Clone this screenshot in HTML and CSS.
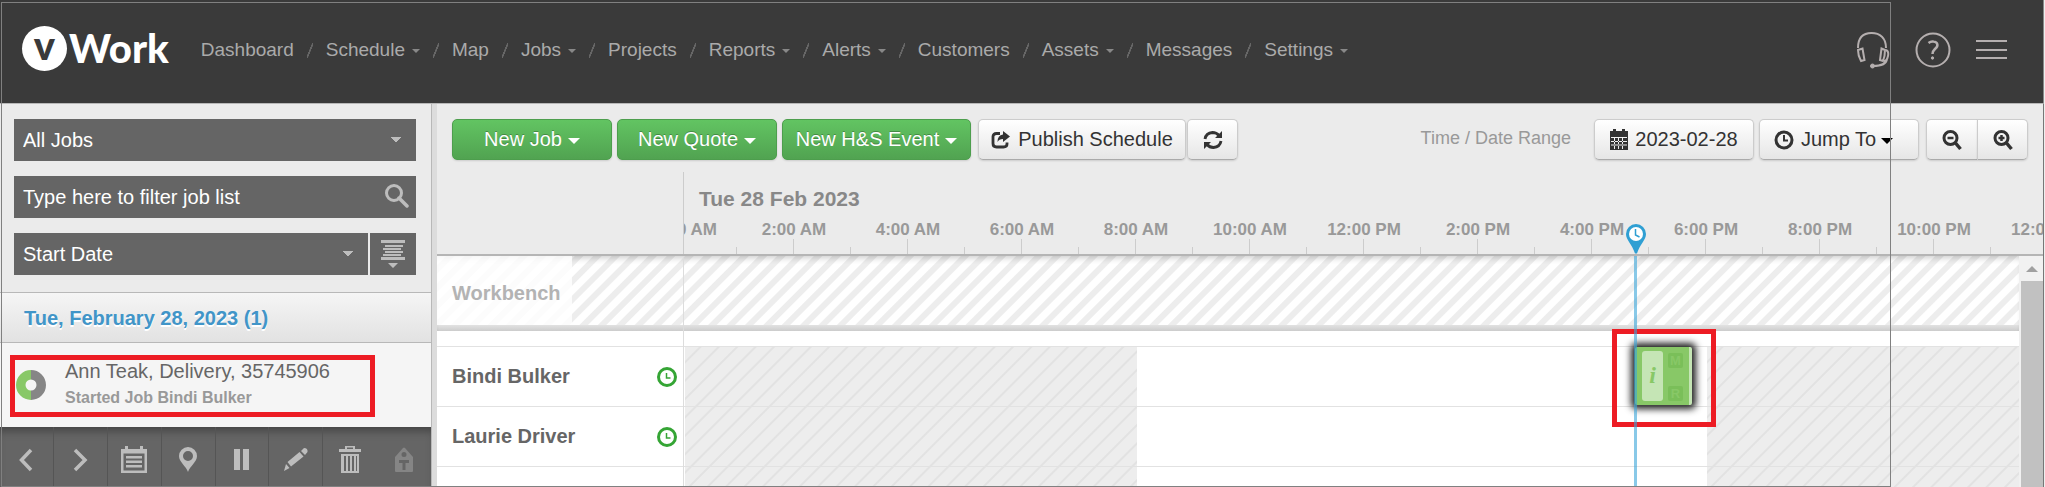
FILE: index.html
```html
<!DOCTYPE html>
<html lang="en">
<head>
<meta charset="utf-8">
<title>vWork Schedule</title>
<link rel="stylesheet" href="styles.css">
</head>
<body>
<div class="app">
  <header class="topbar">
    <a class="logo" href="#" aria-label="vWork"><span class="logo-mark">v</span><span class="logo-word">Work</span></a>
    <nav class="nav">
      <a href="#">Dashboard</a><i class="sep"></i>
      <a href="#" class="drop">Schedule</a><i class="sep"></i>
      <a href="#">Map</a><i class="sep"></i>
      <a href="#" class="drop">Jobs</a><i class="sep"></i>
      <a href="#">Projects</a><i class="sep"></i>
      <a href="#" class="drop">Reports</a><i class="sep"></i>
      <a href="#" class="drop">Alerts</a><i class="sep"></i>
      <a href="#">Customers</a><i class="sep"></i>
      <a href="#" class="drop">Assets</a><i class="sep"></i>
      <a href="#">Messages</a><i class="sep"></i>
      <a href="#" class="drop">Settings</a>
    </nav>
    <div class="tools">
      <button aria-label="Support"><svg width="34" height="38" viewBox="0 0 34 38" fill="none" stroke="#b5afaf" stroke-width="2"><path d="M2 17C2 7 7 2 15.500 2S30 7 30 17"/><path d="M2 19l4.500-1.500L8.500 29 5 30Q2 25 2 19zM29 19l-3.500-1.500L24 29l3 1Q29 25 29 19z"/><path d="M30 19q3 1 2 6t-4 5M31 28q-1 7-14 7"/><circle cx="16.500" cy="35" r="2" fill="#b5afaf" stroke-width="1"/></svg></button>
      <button aria-label="Help"><svg width="36" height="36" viewBox="0 0 36 36" fill="none" stroke="#b5afaf" stroke-width="2"><circle cx="18" cy="18" r="16.500"/><path d="M13.500 11Q16 9 18.500 9.500C23 10 23.500 14 20.500 16.500 18.500 18.500 17.500 19 17.500 22" stroke-width="2.500"/><circle cx="17.500" cy="26" r="1.200" fill="#b5afaf" stroke-width="1"/></svg></button>
      <button aria-label="Menu"><svg width="31" height="20" viewBox="0 0 31 20" fill="#b5afaf"><path d="M0 0h31v2H0zM0 9h31v2H0zM0 17h31v2H0z"/></svg></button>
    </div>
  </header>

  <div class="workspace">
    <aside class="sidebar">
      <div class="filters">
        <select class="field" aria-label="Job filter"><option>All Jobs</option></select>
        <div class="search">
          <input class="field" type="text" aria-label="Filter job list" placeholder="Type here to filter job list">
          <svg width="24" height="24" viewBox="0 0 24 24" fill="none" stroke="#bdbdbd"><circle cx="9" cy="9" r="7.500" stroke-width="3"/><path d="M14 14l8 8" stroke-width="3.500" stroke-linecap="round"/></svg>
        </div>
        <div class="sort">
          <select class="field" aria-label="Sort by"><option>Start Date</option></select>
          <button aria-label="Sort order"><svg width="24" height="28" viewBox="0 0 24 28" fill="#bdbdbd"><path d="M0 0h24v3H0zM4 5h18v2H4zM2 8h18v2H2zM4 11h18v2H4zM2 14h18v2H2zM0 17h24v3H0zM7 23h10l-5 5z"/></svg></button>
        </div>
      </div>
      <h2 class="group">Tue, February 28, 2023 (1)</h2>
      <div class="job">
        <svg width="30" height="30" viewBox="0 0 30 30" fill="none" stroke-width="9.500"><path d="M15 4.750a10.250 10.250 0 0 0 0 20.500" stroke="#88c867"/><path d="M15 4.750a10.250 10.250 0 0 1 0 20.500" stroke="#868686"/></svg>
        <div>
          <p class="job-title">Ann Teak, Delivery, 35745906</p>
          <p class="job-state">Started Job Bindi Bulker</p>
        </div>
        <span class="callout callout-job"></span>
      </div>
      <div class="actions">
        <button aria-label="Previous"><svg width="28" height="28" viewBox="0 0 28 28"><path d="M19 4L9.500 14l9.500 10" fill="none" stroke="#bdbdbd" stroke-width="3.500"/></svg></button>
        <button aria-label="Next"><svg width="28" height="28" viewBox="0 0 28 28"><path d="M9 4l10 10L9 24" fill="none" stroke="#bdbdbd" stroke-width="3.500"/></svg></button>
        <button aria-label="Calendar"><svg width="28" height="28" viewBox="0 0 28 28" fill="#bdbdbd"><path fill-rule="evenodd" d="M1 3h26v24H1zM3.500 7.500v17h21v-17z"/><path d="M5 0h3v5H5zM20 0h3v5h-3zM6 10h16v2.500H6zM6 14.500h16V17H6zM6 19h16v2.500H6z"/></svg></button>
        <button aria-label="Location"><svg width="28" height="28" viewBox="0 0 28 28"><path fill="#bdbdbd" fill-rule="evenodd" d="M14 1a9 9 0 0 1 9 9c0 6-7 10-9 16C12 20 5 16 5 10a9 9 0 0 1 9-9zm0 4a5 5 0 1 0 0 10 5 5 0 0 0 0-10z"/></svg></button>
        <button aria-label="Pause"><svg width="28" height="28" viewBox="0 0 28 28"><path fill="#bdbdbd" d="M6 3h6v21H6zM15 3h6v21h-6z"/></svg></button>
        <button aria-label="Edit"><svg width="28" height="28" viewBox="0 0 28 28"><path fill="#bdbdbd" d="M2 25l2-7 3.500 4zM5.500 16L17.500 6l4 4.500L9 20.500zM19 5l3-3q4 0 3.500 4L23 9z"/></svg></button>
        <button aria-label="Delete"><svg width="28" height="28" viewBox="0 0 28 28" fill="#bdbdbd"><path fill-rule="evenodd" d="M9 0h10v3h6v3H3V3h6zm2 1.500V3h6V1.500zM5 8h18v19H5zm3 2v15h2V10zm4 0v15h2V10zm4 0v15h2V10zm4 0v15h1V10z"/></svg></button>
        <button aria-label="Tag" disabled><svg width="28" height="28" viewBox="0 0 28 28"><path fill="#858585" fill-rule="evenodd" d="M13 2q1-1 2 0l8 9v14q0 1-1 1H6q-1 0-1-1V11zm1 4a2.500 2.500 0 1 0 0 5 2.500 2.500 0 0 0 0-5zM9 14v3h3.500v7h3v-7H19v-3z"/></svg></button>
      </div>
    </aside>

    <main class="main">
      <div class="toolbar">
        <button class="btn green w-job">New Job<i class="caret"></i></button>
        <button class="btn green w-job">New Quote<i class="caret"></i></button>
        <button class="btn green w-event">New H&amp;S Event<i class="caret"></i></button>
        <div class="pair">
          <button class="btn w-publish"><svg width="20" height="18" viewBox="0 0 20 18"><path d="M9 2.500H5.500Q2 2.500 2 5.500v7Q2 16 5.500 16h7q3.500 0 3.500-3v-1.500" fill="none" stroke="#333" stroke-width="2.800"/><path fill="#333" d="M12 0l7 5.500-7 5.500V8q-4 0-5.500 3Q6.500 4 12 3.500z"/></svg>Publish Schedule</button>
          <button class="btn w-icon" aria-label="Refresh"><svg width="20" height="20" viewBox="0 0 20 20"><path d="M2 9Q3 3 9.500 2.500q4 0 6.500 3M18 11q-1 6-7.500 6.500-4 0-6.500-3" fill="none" stroke="#333" stroke-width="2.800"/><path fill="#333" d="M19 1v7h-7zM1 19v-7h7z"/></svg></button>
        </div>
        <span class="range">Time / Date Range</span>
        <button class="btn w-job date"><svg width="18" height="22" viewBox="0 0 18 22"><path fill="#333" fill-rule="evenodd" d="M0 2h18v19H0zM1 8h16v1H1zM1 12h16v1H1zM1 15.500h16v1H1zM4 9v11h1V9zM8 9v11h1V9zM12 9v11h1V9z"/><path fill="#333" d="M3 0h3v3H3zM12 0h3v3h-3z"/></svg>2023-02-28</button>
        <button class="btn w-job jump"><svg width="20" height="22" viewBox="0 0 20 22" fill="none" stroke="#333"><circle cx="10" cy="11" r="8" stroke-width="3"/><path d="M10 6v5.500h4" stroke-width="2"/></svg>Jump To<i class="caret"></i></button>
        <div class="group-btn">
          <button class="btn w-icon" aria-label="Zoom out"><svg width="20" height="22" viewBox="0 0 20 22" fill="none" stroke="#333"><circle cx="8.500" cy="9" r="6.500" stroke-width="3"/><path d="M13.500 14l5 6" stroke-width="3.500"/><path d="M5.500 9h6" stroke-width="2.500"/></svg></button>
          <button class="btn w-icon" aria-label="Zoom in"><svg width="20" height="22" viewBox="0 0 20 22" fill="none" stroke="#333"><circle cx="8.500" cy="9" r="6.500" stroke-width="3"/><path d="M13.500 14l5 6" stroke-width="3.500"/><path d="M5.500 9h6M8.500 6v6" stroke-width="2.500"/></svg></button>
        </div>
      </div>

      <div class="ruler">
        <div class="ruler-body">
          <h1 class="day">Tue 28 Feb 2023</h1>
          <div class="hours">
            <span>12:00 AM</span><span>2:00 AM</span><span>4:00 AM</span><span>6:00 AM</span><span>8:00 AM</span><span>10:00 AM</span><span>12:00 PM</span><span>2:00 PM</span><span>4:00 PM</span><span>6:00 PM</span><span>8:00 PM</span><span>10:00 PM</span><span>12:00 AM</span>
          </div>
          <svg class="pin" width="20" height="30" viewBox="0 0 20 30"><path fill="#2f9fd3" d="M10 0a10 10 0 0 1 10 10c0 6-6 10-9 19.500H9C6 20 0 16 0 10A10 10 0 0 1 10 0z"/><circle cx="10" cy="10" r="7" fill="#fff"/><path d="M9.500 5v6l4 2" fill="none" stroke="#2f9fd3" stroke-width="1.500"/></svg>
        </div>
      </div>

      <div class="board">
        <div class="rows">
          <div class="bench"><div class="bench-label"><span>Workbench</span></div><div class="bench-lane"></div></div>
          <div class="crew">
            <div class="names">
              <div class="name">Bindi Bulker<svg width="20" height="20" viewBox="0 0 20 20" fill="none" stroke="#35a535"><circle cx="10" cy="10" r="8.500" stroke-width="3"/><path d="M9.500 6v5h4" stroke-width="1.500"/></svg></div>
              <div class="name">Laurie Driver<svg width="20" height="20" viewBox="0 0 20 20" fill="none" stroke="#35a535"><circle cx="10" cy="10" r="8.500" stroke-width="3"/><path d="M9.500 6v5h4" stroke-width="1.500"/></svg></div>
              <div class="name"></div>
            </div>
            <div class="canvas">
              <div class="shifts"><div class="off"></div><div></div><div class="off"></div></div>
              <div class="lanes"><div></div><div></div><div></div></div>
              <div class="task"><b class="info">i</b><span class="badges"><span>M</span><span>R</span></span></div>
              <span class="callout callout-task"></span>
            </div>
          </div>
          <div class="now"></div>
        </div>
        <div class="scroll"><i class="up"></i><div class="thumb"></div></div>
      </div>
    </main>
  </div>
  <div class="frame"></div>
</div>
</body>
</html>
```
FILE: styles.css
```css
* { box-sizing: border-box; }
body { margin: 0; font-family: "Liberation Sans", Arial, sans-serif; font-size: 20px; color: #666; background: #fff; }
button, input, select { font: inherit; margin: 0; }
button { padding: 0; border: 0; background: none; display: flex; align-items: center; justify-content: center; }
h1, h2, p { margin: 0; }
svg { display: block; flex: none; }

.app { position: relative; height: 100vh; overflow: hidden; display: flex; flex-direction: column; border-right: 1px solid #eee; }

.topbar { flex: none; height: 104px; background: #3a3a3a; border-bottom: 1px solid #b8b8b8; border-right: 1px solid #8a8a8a; display: flex; padding: 0 36px 0 22px; }
.logo { display: flex; align-items: center; gap: 2px; height: 96px; margin-right: 32px; color: #fff; text-decoration: none; font: 900 40px/45px Lato, sans-serif; }
.logo-mark { width: 45px; height: 45px; border-radius: 50%; background: #fff; color: #3a3a3a; text-align: center; line-height: 38px; }
.nav { display: flex; align-items: center; height: 100px; gap: 13px; font-size: 19px; }
.nav a { color: #aaa; text-decoration: none; }
.drop::after { content: ""; display: inline-block; margin-left: 7px; vertical-align: 3px; border: 4px solid transparent; border-top-color: #888; border-bottom: 0; }
.sep { width: 6px; height: 15px; background: linear-gradient(112deg, transparent 42%, #666 43%, #666 57%, transparent 58%); }
.tools { display: flex; align-items: center; height: 100px; margin-left: auto; gap: 25px; }

.workspace { flex: 1; min-height: 0; display: flex; background: #ebebeb; }
.sidebar { flex: none; width: 432px; display: flex; flex-direction: column; border-right: 1px solid #b8b8b8; }
.filters { padding: 15px 15px 17px 14px; display: flex; flex-direction: column; gap: 15px; }
.field { appearance: none; display: block; width: 100%; height: 42px; padding: 0 9px; border: 0; border-radius: 0; color: #fff; background: #656565; }
select.field { background-image: linear-gradient(to top right, transparent 50%, #bdbdbd 51%), linear-gradient(to top left, transparent 50%, #bdbdbd 51%); background-repeat: no-repeat; background-position: right 20px center, right 14px center; background-size: 6px 6px; }
.field::placeholder { color: #fff; opacity: 1; }
.search { position: relative; }
.search svg { position: absolute; right: 7px; top: 8px; }
.sort { display: flex; gap: 2px; }
.sort button { flex: none; width: 46px; background: #656565; }
.group { height: 51px; padding: 0 24px; font-size: 20px; line-height: 51px; color: #4195c8; text-shadow: 0 2px 0 #fff; background: linear-gradient(#f5f5f5, #e2e2e2); border: 1px solid #b8b8b8; border-width: 1px 0; }
.job { position: relative; flex: 1; padding: 12px 16px; background: #f5f5f5; display: flex; gap: 19px; }
.job svg { margin-top: 15px; }
.job-title { line-height: 32px; }
.job-state { font-size: 16px; font-weight: bold; line-height: 22px; color: #999; }
.callout { position: absolute; border: 5px solid #ed1c24; }
.callout-job { left: 10px; top: 12px; width: 365px; height: 62px; }
.actions { flex: none; height: 60px; display: grid; grid-template-columns: repeat(8, 1fr); background: #656565; box-shadow: inset 0 8px 8px -4px #444; }
.actions button { border-right: 1px solid #555; padding-top: 6px; }
.actions button:nth-last-child(-n+2) { border-right: 0; }

.main { flex: 1; min-width: 0; display: flex; flex-direction: column; border-left: 5px solid #dcdcdc; border-right: 1px solid #777; }
.toolbar { flex: none; display: flex; gap: 5px; padding: 15px 15px 12px; }
.btn { height: 41px; gap: 7px; color: #333; white-space: nowrap; border-radius: 5px; background: linear-gradient(#fff, #e6e6e6); border: 1px solid #ccc; border-bottom-color: #aaa; box-shadow: 0 1px 2px #0002; }
.green { color: #fff; background: linear-gradient(#62c462, #51a351); border-color: #4d9e4d; text-shadow: 0 -1px 0 #0004; gap: 6px; }
.caret { border: 6px solid transparent; border-top-color: currentColor; border-bottom: 0; margin-top: 3px; }
.w-job { width: 160px; }
.w-event { width: 189px; }
.w-publish { width: 208px; }
.w-icon { width: 51px; }
.jump { gap: 7px; justify-content: flex-start; padding-left: 14px; }
.jump .caret { margin-left: -2px; border-top-color: #000; }
.pair { display: flex; gap: 1px; margin-left: 2px; }
.range { margin-left: auto; margin-right: 18px; font-size: 18px; line-height: 39px; color: #999; }
.group-btn { display: flex; margin-left: 2px; }
.group-btn .btn:first-child { border-radius: 5px 0 0 5px; border-right: 0; }
.group-btn .btn:last-child { border-radius: 0 5px 5px 0; }

.ruler { flex: none; height: 84px; padding-left: 246px; border-bottom: 2px solid #b5b5b5; }
.ruler-body { position: relative; height: 82px; overflow: hidden; border-left: 1px solid #ccc; }
.day { padding: 12px 15px 3px; font-size: 21px; line-height: 30px; color: #888; }
.hours { display: flex; width: max-content; margin-left: -62px; }
.hours span { width: 114px; height: 37px; padding-left: 2px; text-align: center; font-size: 17px; font-weight: bold; line-height: 25px; color: #999; background: linear-gradient(#ccc, #ccc) no-repeat 57px 100% / 1px 15px, linear-gradient(#ccc, #ccc) no-repeat 0 100% / 1px 7px; }
.pin { position: absolute; left: 942px; top: 52px; }

.board { flex: 1; min-height: 0; display: flex; background: #fff; overflow: hidden; }
.rows { position: relative; flex: 1; min-width: 0; display: flex; flex-direction: column; }
.bench { flex: none; display: flex; height: 75px; background: linear-gradient(#e2e2e2, #ccc) no-repeat 0 100% / 100% 6px, repeating-linear-gradient(135deg, #fff 0 6px, #ededed 7px 12px, #fff 13px); box-shadow: inset 0 6px 6px -4px #0003; }
.bench-label { width: 246px; }
.bench-label span { display: block; width: 135px; height: 69px; padding-left: 15px; line-height: 74px; font-weight: bold; color: #b3b3b3; background: #fffc; }
.bench-lane { flex: 1; border-left: 1px solid #ddd; }
.crew { flex: 1; display: flex; }
.names { width: 246px; padding-top: 15px; }
.name { height: 60px; padding: 0 6px 0 15px; border-top: 1px solid #e2e2e2; display: flex; align-items: center; justify-content: space-between; font-weight: bold; }
.canvas { position: relative; flex: 1; display: grid; padding-top: 15px; border-left: 1px solid #ddd; }
.shifts, .lanes { grid-area: 1 / 1; }
.shifts { display: grid; grid-template-columns: 452px 570px 1fr; margin-left: 1px; }
.off { background: repeating-linear-gradient(135deg, #ededed 0 10px, #e2e2e2 11px 12px, #ededed 13px); }
.lanes div { height: 60px; border-top: 1px solid #e2e2e2; }
.task { position: absolute; left: 951px; top: 16px; width: 57px; height: 58px; padding: 4px 6px 4px 7px; display: flex; gap: 5px; background: #88c867; border-right: 3px solid #c5e5b5; border-radius: 2px; box-shadow: 0 0 7px 4px #222; }
.info { width: 21px; height: 50px; border-radius: 3px; background: #c5e5b5; color: #88c867; text-align: center; font: italic bold 24px/48px "Liberation Serif", serif; }
.badges { display: flex; flex-direction: column; justify-content: space-between; padding-top: 2px; }
.badges span { width: 15px; height: 15px; border-radius: 2px; background: #7abf59; color: #88c867; font-size: 13px; font-weight: bold; line-height: 15px; text-align: center; }
.callout-task { left: 928px; top: -2px; width: 104px; height: 98px; }
.now { position: absolute; left: 1197px; top: 0; bottom: 0; width: 3px; background: #3ba5d899; }
.scroll { flex: none; width: 24px; padding: 10px 0 0 2px; display: flex; flex-direction: column; gap: 9px; align-items: center; background: #f1f1f1; }
.up { border: 6px solid transparent; border-bottom-color: #a0a0a0; border-top: 0; }
.thumb { flex: 1; width: 100%; background: #c1c1c1; }

.frame { position: absolute; left: 1px; top: 2px; right: 153px; bottom: 0; border: 1px solid #808080; pointer-events: none; }
```
